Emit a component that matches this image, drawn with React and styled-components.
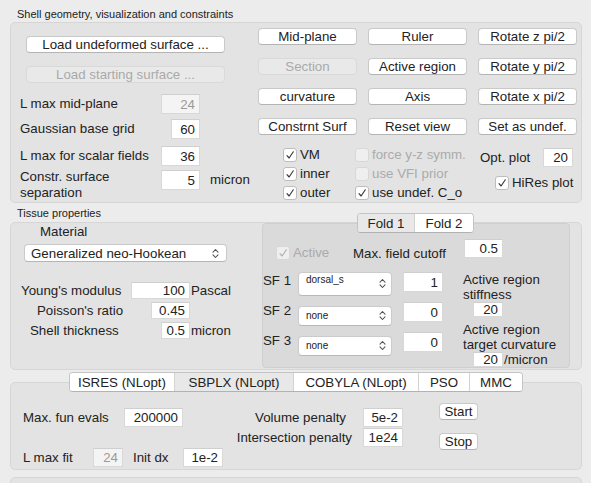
import React from "react";
import styled, { createGlobalStyle } from "styled-components";

const Global = createGlobalStyle`
  html, body { margin: 0; padding: 0; background: #ececec; }
  body {
    font-family: "Liberation Sans", Arial, sans-serif;
    font-size: 13.3px;
    color: #222;
  }
  * { box-sizing: border-box; }
`;

const Window = styled.div`
  width: 591px;
  height: 483px;
  overflow: hidden;
  background: #ececec;
  display: flex;
  flex-direction: column;
`;

const SectionTitle = styled.div`
  font-size: 11px;
  line-height: 16px;
  height: ${(p) => p.$h}px;
  padding-top: ${(p) => p.$pt}px;
  padding-left: 17px;
  color: #222;
  flex-shrink: 0;
`;

const GroupBox = styled.div`
  margin-left: 10px;
  margin-top: ${(p) => p.$mt || 0}px;
  width: 572px;
  height: ${(p) => p.$h}px;
  flex-shrink: 0;
  background: #e3e3e3;
  border: 1px solid #d6d6d6;
  border-radius: 5px;
  position: relative;
  display: flex;
  align-items: flex-start;
`;

const Button = styled.div`
  height: 17px;
  display: flex;
  align-items: center;
  justify-content: center;
  white-space: nowrap;
  background: ${(p) => (p.$disabled ? "#e9e9e9" : "#fff")};
  color: ${(p) => (p.$disabled ? "#a9a9a9" : "#222")};
  border: 1px solid ${(p) => (p.$disabled ? "#d9d9d9" : "#c9c9c9")};
  border-bottom-color: ${(p) => (p.$disabled ? "#d9d9d9" : "#b4b4b4")};
  border-radius: 4px;
  width: ${(p) => (p.$w ? `${p.$w}px` : "auto")};
`;

const WideButton = styled(Button)`
  margin-left: 6px;
  width: 199px;
  margin-bottom: ${(p) => p.$mb}px;
`;

const TextInput = styled.div`
  width: ${(p) => p.$w}px;
  height: ${(p) => p.$h || 20}px;
  flex-shrink: 0;
  background: ${(p) => (p.$disabled ? "#f4f4f4" : "#fff")};
  color: ${(p) => (p.$disabled ? "#9a9a9a" : "#222")};
  border: 1px solid #d8d8d8;
  border-top-color: #cfcfcf;
  display: flex;
  align-items: center;
  justify-content: flex-end;
  padding-right: 4px;
  white-space: nowrap;
`;

/* ---------- group 1 ---------- */

const LeftCol = styled.div`
  width: 247px;
  flex-shrink: 0;
  padding: 13px 0 0 9px;
  display: flex;
  flex-direction: column;
`;

const FormRow = styled.div`
  display: flex;
  align-items: ${(p) => (p.$top ? "flex-start" : "center")};
  margin-top: ${(p) => p.$mt}px;
  min-height: 20px;
`;

const FormLabel = styled.div`
  flex: 0 0 ${(p) => p.$w}px;
  line-height: 16px;
  margin-top: ${(p) => (p.$top ? -1 : 0)}px;
  white-space: nowrap;
`;

const Unit = styled.div`
  margin-left: ${(p) => p.$ml}px;
  margin-top: ${(p) => p.$mt || 0}px;
  white-space: nowrap;
`;

const RightCol = styled.div`
  flex: 1;
  padding-top: 5px;
  display: flex;
  flex-direction: column;
`;

const ButtonGrid = styled.div`
  display: grid;
  grid-template-columns: repeat(3, 99px);
  grid-auto-rows: 17px;
  column-gap: 11px;
  row-gap: 13px;
`;

const CheckArea = styled.div`
  display: flex;
  margin-top: 10px;
`;

const CheckCol = styled.div`
  display: flex;
  flex-direction: column;
  width: ${(p) => p.$w}px;
  margin-left: ${(p) => p.$ml || 0}px;
  padding-top: ${(p) => p.$pt || 0}px;
`;

const CheckRow = styled.div`
  display: flex;
  align-items: center;
  height: 19px;
  white-space: nowrap;
  color: ${(p) => (p.$disabled ? "#ababab" : "#222")};
  margin-top: ${(p) => p.$mt || 0}px;
  padding-left: ${(p) => p.$pl || 0}px;
  flex-shrink: 0;
`;

const Box = styled.span`
  width: 14px;
  height: 14px;
  flex-shrink: 0;
  margin-right: 3px;
  border-radius: 3px;
  background: ${(p) => (p.$disabled ? "#efefef" : "#fff")};
  border: 1px solid ${(p) => (p.$disabled ? "#d8d8d8" : "#bdbdbd")};
  display: flex;
  align-items: center;
  justify-content: center;
`;

const OptRow = styled.div`
  display: flex;
  align-items: center;
  justify-content: space-between;
  height: 19px;
`;

function Check({ label, checked, disabled, ...rest }) {
  return (
    <CheckRow $disabled={disabled} {...rest}>
      <Box $disabled={disabled}>
        {checked && (
          <svg width="10" height="10" viewBox="0 0 10 10">
            <path
              d="M2 5.6 L4.1 8 L8.3 1.8"
              fill="none"
              stroke={disabled ? "#b0b0b0" : "#3a3a3a"}
              strokeWidth="1.15"
              strokeLinecap="round"
              strokeLinejoin="round"
            />
          </svg>
        )}
      </Box>
      {label}
    </CheckRow>
  );
}

/* ---------- tissue ---------- */

const TissueLeft = styled.div`
  width: 251px;
  flex-shrink: 0;
  display: flex;
  flex-direction: column;
`;

const MaterialLabel = styled.div`
  padding-left: 29px;
  margin-top: 1px;
  line-height: 16px;
`;

const Chevrons = () => (
  <svg width="7" height="11" viewBox="0 0 7 11">
    <path
      d="M1 4.2 L3.5 1.5 L6 4.2 M1 6.8 L3.5 9.5 L6 6.8"
      fill="none"
      stroke="#555"
      strokeWidth="1.1"
      strokeLinecap="round"
      strokeLinejoin="round"
    />
  </svg>
);

const PopUp = styled.div`
  margin-left: 13px;
  margin-top: 4px;
  width: 203px;
  height: 18px;
  background: #fff;
  border: 1px solid #c9c9c9;
  border-bottom-color: #b5b5b5;
  border-radius: 4px;
  display: flex;
  align-items: center;
  justify-content: space-between;
  padding: 0 7px 0 6px;
  white-space: nowrap;
`;

const PropRow = styled.div`
  display: flex;
  align-items: center;
  height: 17px;
  margin-top: ${(p) => p.$mt}px;
`;

const PropLabel = styled.div`
  flex: 0 0 ${(p) => p.$w}px;
  padding-left: ${(p) => p.$pl}px;
  white-space: nowrap;
`;

const FoldPanel = styled.div`
  width: 308px;
  height: 145px;
  flex-shrink: 0;
  background: #dadada;
  border: 1px solid #cfcfcf;
  border-radius: 4px;
  position: relative;
  display: flex;
  flex-direction: column;
`;

const Segmented = styled.div`
  position: absolute;
  top: -11px;
  left: ${(p) => p.$left}px;
  display: flex;
  height: 20px;
  background: #fff;
  border: 1px solid #c4c4c4;
  border-bottom-color: #b2b2b2;
  border-radius: 4px;
  overflow: hidden;
`;

const Segment = styled.div`
  width: ${(p) => p.$w}px;
  display: flex;
  align-items: center;
  justify-content: center;
  white-space: nowrap;
  background: ${(p) => (p.$active ? "#e8e8e8" : "#fff")};
  & + & {
    border-left: 1px solid #d3d3d3;
  }
`;

const FoldTop = styled.div`
  display: flex;
  align-items: flex-start;
  margin-top: 15px;
  padding-left: 13px;
`;

const CheckCell = styled.div`
  width: 77px;
  margin-top: 4px;
`;

const CutoffLabel = styled.div`
  width: 111px;
  margin-top: 7px;
  line-height: 16px;
  white-space: nowrap;
`;

const FoldBody = styled.div`
  display: flex;
  margin-top: 10px;
`;

const SFGrid = styled.div`
  display: flex;
  flex-direction: column;
`;

const SFRow = styled.div`
  display: flex;
  align-items: flex-start;
  height: 24px;
  margin-top: ${(p) => p.$mt}px;
`;

const SFLabel = styled.div`
  width: 35px;
  line-height: 18px;
  white-space: nowrap;
`;

const MiniSelect = styled.div`
  width: 94px;
  height: ${(p) => p.$h}px;
  margin-top: ${(p) => p.$mt}px;
  margin-right: 11px;
  background: #fff;
  border: 1px solid #cbcbcb;
  border-bottom-color: #b8b8b8;
  border-radius: 4px;
  position: relative;
  display: flex;
  align-items: ${(p) => (p.$topText ? "flex-start" : "center")};
  padding: ${(p) => (p.$topText ? "1px" : "0")} 0 0 7px;
  font-size: 10px;
  line-height: 12px;
`;

const ChevronSlot = styled.span`
  position: absolute;
  right: 5px;
  top: 50%;
  margin-top: -6px;
  display: flex;
`;

const RegionCol = styled.div`
  margin-left: 20px;
  display: flex;
  flex-direction: column;
  line-height: 15px;
  white-space: nowrap;
`;

const RegionText = styled.div`
  margin-top: ${(p) => p.$mt || 0}px;
`;

const RegionInputRow = styled.div`
  display: flex;
  align-items: center;
  padding-left: 10px;
`;

/* ---------- bottom ---------- */

const BottomLeft = styled.div`
  width: 212px;
  flex-shrink: 0;
  padding: 25px 0 0 12px;
  display: flex;
  flex-direction: column;
`;

const BRow = styled.div`
  display: flex;
  align-items: center;
  height: 19px;
  margin-top: ${(p) => p.$mt || 0}px;
`;

const BLabel = styled.div`
  flex: 0 0 ${(p) => p.$w}px;
  margin-left: ${(p) => p.$ml || 0}px;
  white-space: nowrap;
`;

const BottomMid = styled.div`
  width: 180px;
  flex-shrink: 0;
  padding-top: 25px;
  display: flex;
  flex-direction: column;
`;

const PenaltyLabel = styled.div`
  flex: 0 0 140px;
  text-align: right;
  padding-right: ${(p) => p.$pr}px;
  white-space: nowrap;
`;

const BottomRight = styled.div`
  margin-left: 36px;
  padding-top: 20px;
  display: flex;
  flex-direction: column;
`;

const SmallButton = styled(Button)`
  width: 39px;
  margin-top: ${(p) => p.$mt || 0}px;
`;

const mainButtons = [
  ["Mid-plane"],
  ["Ruler"],
  ["Rotate z pi/2"],
  ["Section", true],
  ["Active region"],
  ["Rotate y pi/2"],
  ["curvature"],
  ["Axis"],
  ["Rotate x pi/2"],
  ["Constrnt Surf"],
  ["Reset view"],
  ["Set as undef."],
];

const sfRows = [
  { label: "SF 1", value: "dorsal_s", num: "1", h: 24, mt: 0, top: true },
  { label: "SF 2", value: "none", num: "0", h: 20, mt: 4 },
  { label: "SF 3", value: "none", num: "0", h: 20, mt: 4 },
];

export default function App() {
  return (
    <Window>
      <Global />
      <SectionTitle $h={22} $pt={6}>
        Shell geometry, visualization and constraints
      </SectionTitle>
      <GroupBox $h={181}>
        <LeftCol>
          <WideButton $mb={13}>Load undeformed surface ...</WideButton>
          <WideButton $mb={11} $disabled>
            Load starting surface ...
          </WideButton>
          <FormRow $mt={0}>
            <FormLabel $w={141}>L max mid-plane</FormLabel>
            <TextInput $w={39} $disabled>24</TextInput>
          </FormRow>
          <FormRow $mt={5}>
            <FormLabel $w={151}>Gaussian base grid</FormLabel>
            <TextInput $w={29}>60</TextInput>
          </FormRow>
          <FormRow $mt={7}>
            <FormLabel $w={141}>L max for scalar fields</FormLabel>
            <TextInput $w={39}>36</TextInput>
          </FormRow>
          <FormRow $mt={4} $top>
            <FormLabel $w={141} $top>
              Constr. surface
              <br />
              separation
            </FormLabel>
            <TextInput $w={39}>5</TextInput>
            <Unit $ml={10} $mt={2}>micron</Unit>
          </FormRow>
        </LeftCol>
        <RightCol>
          <ButtonGrid>
            {mainButtons.map(([t, d]) => (
              <Button key={t} $disabled={d}>
                {t}
              </Button>
            ))}
          </ButtonGrid>
          <CheckArea>
            <CheckCol $w={72} $ml={25}>
              <Check label="VM" checked />
              <Check label="inner" checked />
              <Check label="outer" checked />
            </CheckCol>
            <CheckCol $w={125}>
              <Check label="force y-z symm." disabled />
              <Check label="use VFI prior" disabled />
              <Check label="use undef. C_o" checked />
            </CheckCol>
            <CheckCol $w={93} $pt={3}>
              <OptRow>
                Opt. plot
                <TextInput $w={30} $h={19}>20</TextInput>
              </OptRow>
              <Check label="HiRes plot" checked $mt={6} $pl={15} />
            </CheckCol>
          </CheckArea>
        </RightCol>
      </GroupBox>

      <SectionTitle $h={19} $pt={2}>
        Tissue properties
      </SectionTitle>
      <GroupBox $h={148}>
        <TissueLeft>
          <MaterialLabel>Material</MaterialLabel>
          <PopUp>
            Generalized neo-Hookean
            <Chevrons />
          </PopUp>
          <PropRow $mt={20}>
            <PropLabel $w={120} $pl={10}>Young's modulus</PropLabel>
            <TextInput $w={59} $h={17}>100</TextInput>
            <Unit $ml={1}>Pascal</Unit>
          </PropRow>
          <PropRow $mt={3}>
            <PropLabel $w={140} $pl={26}>Poisson's ratio</PropLabel>
            <TextInput $w={39} $h={17}>0.45</TextInput>
          </PropRow>
          <PropRow $mt={3}>
            <PropLabel $w={150} $pl={19}>Shell thickness</PropLabel>
            <TextInput $w={29} $h={17}>0.5</TextInput>
            <Unit $ml={1}>micron</Unit>
          </PropRow>
        </TissueLeft>
        <FoldPanel>
          <Segmented $left={94}>
            <Segment $w={56} $active>Fold 1</Segment>
            <Segment $w={59}>Fold 2</Segment>
          </Segmented>
          <FoldTop>
            <CheckCell>
              <Check label="Active" checked disabled />
            </CheckCell>
            <CutoffLabel>Max. field cutoff</CutoffLabel>
            <TextInput $w={39} $h={19}>0.5</TextInput>
          </FoldTop>
          <FoldBody>
            <SFGrid>
              {sfRows.map((r, i) => (
                <SFRow key={r.label} $mt={i === 0 ? 0 : 6}>
                  <SFLabel>{r.label}</SFLabel>
                  <MiniSelect $h={r.h} $mt={r.mt} $topText={r.top}>
                    {r.value}
                    <ChevronSlot>
                      <Chevrons />
                    </ChevronSlot>
                  </MiniSelect>
                  <TextInput $w={40} $h={20}>{r.num}</TextInput>
                </SFRow>
              ))}
            </SFGrid>
            <RegionCol>
              <RegionText>Active region</RegionText>
              <RegionText>stiffness</RegionText>
              <RegionInputRow>
                <TextInput $w={30} $h={15}>20</TextInput>
              </RegionInputRow>
              <RegionText $mt={5}>Active region</RegionText>
              <RegionText>target curvature</RegionText>
              <RegionInputRow>
                <TextInput $w={30} $h={15}>20</TextInput>
                <Unit $ml={1}>/micron</Unit>
              </RegionInputRow>
            </RegionCol>
          </FoldBody>
        </FoldPanel>
      </GroupBox>

      <GroupBox $h={88} $mt={12}>
        <Segmented $left={58}>
          <Segment $w={104}>ISRES (NLopt)</Segment>
          <Segment $w={119} $active>SBPLX (NLopt)</Segment>
          <Segment $w={125}>COBYLA (NLopt)</Segment>
          <Segment $w={51}>PSO</Segment>
          <Segment $w={53}>MMC</Segment>
        </Segmented>
        <BottomLeft>
          <BRow>
            <BLabel $w={101}>Max. fun evals</BLabel>
            <TextInput $w={59} $h={19}>200000</TextInput>
          </BRow>
          <BRow $mt={21}>
            <BLabel $w={70}>L max fit</BLabel>
            <TextInput $w={30} $h={19} $disabled>24</TextInput>
            <BLabel $w={50} $ml={10}>Init dx</BLabel>
            <TextInput $w={40} $h={19}>1e-2</TextInput>
          </BRow>
        </BottomLeft>
        <BottomMid>
          <BRow>
            <PenaltyLabel $pr={17}>Volume penalty</PenaltyLabel>
            <TextInput $w={40} $h={19}>5e-2</TextInput>
          </BRow>
          <BRow $mt={1}>
            <PenaltyLabel $pr={11}>Intersection penalty</PenaltyLabel>
            <TextInput $w={40} $h={19}>1e24</TextInput>
          </BRow>
        </BottomMid>
        <BottomRight>
          <SmallButton>Start</SmallButton>
          <SmallButton $mt={13}>Stop</SmallButton>
        </BottomRight>
      </GroupBox>

      <GroupBox $h={30} $mt={7} />
    </Window>
  );
}
